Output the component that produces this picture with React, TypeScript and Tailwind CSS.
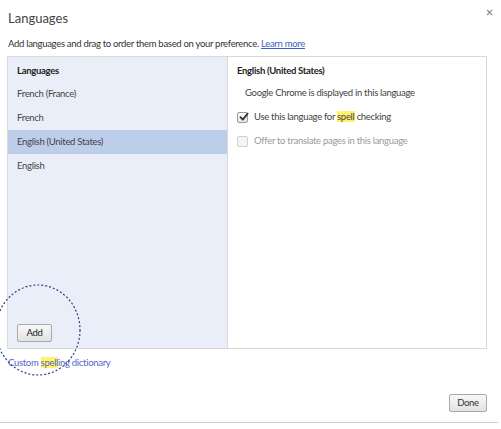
import React from "react";

function Check({ checked, disabled }: { checked?: boolean; disabled?: boolean }) {
  return (
    <span
      className={`relative inline-flex h-[11px] w-[11px] shrink-0 items-center justify-center rounded-[2px] border ${
        disabled ? "border-[#d0d0d0] bg-[#f4f4f4]" : "border-[#9a9a9a] bg-gradient-to-b from-[#fdfdfd] to-[#e6e6e6]"
      }`}
    >
      {checked && (
        <svg width="10" height="10" viewBox="0 0 10 10" className="absolute left-[1px] top-[-1px]">
          <path d="M1.5 5.2 L3.8 7.6 L8.6 1.6" fill="none" stroke="#333" strokeWidth="1.8" strokeLinecap="round" strokeLinejoin="round" />
        </svg>
      )}
    </span>
  );
}

export default function App() {
  const font = { fontFamily: 'Lato, "Open Sans", sans-serif' };
  return (
    <div className="relative h-[429px] w-[501px] overflow-hidden bg-white text-[#333] tracking-[-0.3px]" style={font}>
      <div className="relative">
        <div className="px-[8px] pt-[9px] text-[13px] leading-[18px] tracking-normal text-[#444]">Languages</div>
        <div className="absolute right-[8px] top-[4px] text-[13px] leading-[16px] text-[#777]">×</div>
      </div>
      <div className="mt-[10px] px-[8px] text-[9.5px] leading-[14px] text-[#333]">
        Add languages and drag to order them based on your preference.{" "}
        <span className="text-[#3b5dc9] underline">Learn more</span>
      </div>

      <div className="ml-[7px] mt-[5px] flex h-[293px] w-[480px] border border-[#d9d9d9]">
        <div className="flex w-[220px] flex-col border-r border-[#d9d9d9] bg-[#eaeef8]">
          <div className="px-[9px] pt-[7px] text-[9.5px] font-bold leading-[14px] text-[#222]">Languages</div>
          <div className="mt-[4px] flex flex-col text-[9.5px] text-[#444]">
            <div className="flex h-[24px] items-center px-[9px]">French (France)</div>
            <div className="flex h-[24px] items-center px-[9px]">French</div>
            <div className="flex h-[24px] items-center bg-[#bcceea] px-[9px]">English (United States)</div>
            <div className="flex h-[24px] items-center px-[9px]">English</div>
          </div>
          <div className="flex-1" />
          <div className="px-[9px] pb-[6px]">
            <div className="flex h-[18px] w-[35px] items-center justify-center rounded-[2px] border border-[#a9a9a9] bg-gradient-to-b from-[#f8f8f8] to-[#e2e2e2] text-[9.5px] text-[#222]">
              Add
            </div>
          </div>
        </div>
        <div className="flex flex-1 flex-col px-[9px] text-[9.5px]">
          <div className="pt-[7px] font-bold leading-[14px] text-[#222]">English (United States)</div>
          <div className="mt-[8px] pl-[8px] leading-[14px] text-[#444]">Google Chrome is displayed in this language</div>
          <div className="mt-[10px] flex items-center gap-[6px] leading-[14px] text-[#444]">
            <Check checked />
            <span>
              Use this language for <span className="bg-[#fff36b]">spell</span> checking
            </span>
          </div>
          <div className="mt-[10px] flex items-center gap-[6px] leading-[14px] text-[#9a9a9a]">
            <Check disabled />
            <span>Offer to translate pages in this language</span>
          </div>
        </div>
      </div>

      <div className="mt-[7px] px-[8px] text-[9.5px] leading-[14px] text-[#5566c8]">
        Custom <span className="bg-[#fff36b]">spell</span>ing dictionary
      </div>

      <div className="mt-[24px] flex justify-end pr-[14px]">
        <div className="flex h-[18px] w-[38px] items-center justify-center rounded-[2px] border border-[#a9a9a9] bg-gradient-to-b from-[#f8f8f8] to-[#e2e2e2] text-[9.5px] text-[#333]">
          Done
        </div>
      </div>
      <div className="mt-[10px] h-px w-[498px] bg-[#cfcfcf]" />

      <svg className="pointer-events-none absolute left-0 top-0" width="501" height="429">
        <ellipse cx="38" cy="330" rx="42" ry="45" fill="none" stroke="#2a3f7e" strokeWidth="1.2" strokeDasharray="2 2" />
      </svg>
    </div>
  );
}
